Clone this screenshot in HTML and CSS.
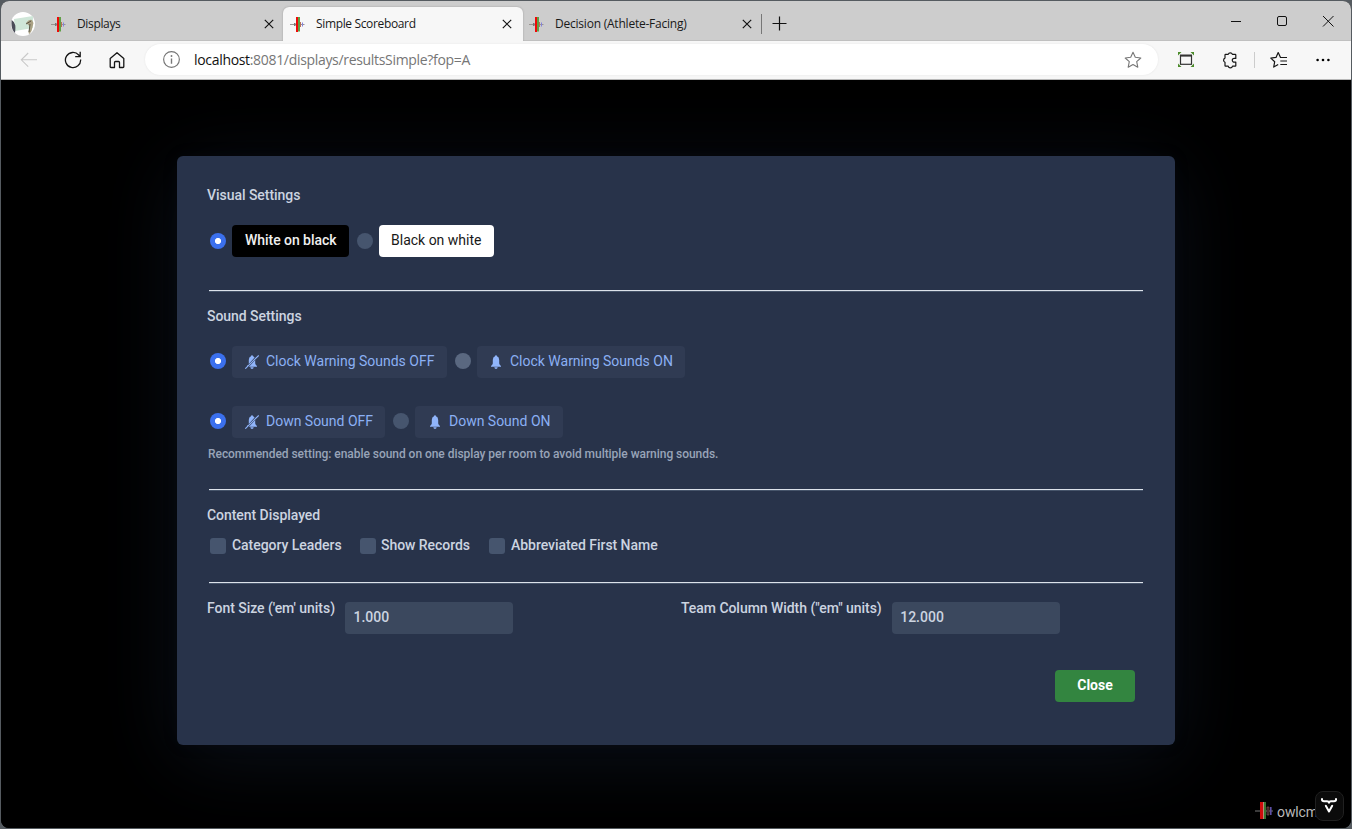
FILE: index.html
```html
<!DOCTYPE html>
<html lang="en">
<head>
<meta charset="utf-8">
<title>Simple Scoreboard</title>
<link rel="stylesheet" href="styles.css">
</head>
<body>
<svg class="defs" width="0" height="0">
  <symbol id="logo" viewBox="0 0 15 15">
    <path d="M0 7.500h14.500" stroke="#99938f" stroke-width="1"/>
    <path d="M4 6h1.500v3H4z" fill="#777"/>
    <path d="M6 0h2v15H6z" fill="#f00808"/>
    <path d="M8 0h2v14.500H8z" fill="#5fa046"/>
    <path d="M10 5h1v5h-1z" fill="#b5705a"/>
    <path d="M12 5.500h1v4h-1z" fill="#8482dc"/>
  </symbol>
  <symbol id="x" viewBox="0 0 10 10"><path d="M.8.8l8.4 8.4M9.200.8L.8 9.200" fill="none" stroke="#111" stroke-width="1.15"/></symbol>
  <symbol id="bell" viewBox="0 0 14 14">
    <path d="M6 1.300Q6 .2 7 .2T8 1.300Q10.200 2 10.200 5v3.600q.2 1.400 1.800 2.300v.9H2v-.9q1.600-.9 1.800-2.300V5Q3.800 2 6 1.300zM5.300 12.300h3.400Q8.500 14 7 14T5.300 12.300z" fill="#90b5fb"/>
  </symbol>
  <symbol id="belloff" viewBox="0 0 14 14">
    <path d="M6 1.300Q6 .2 7 .2T8 1.300Q9 1.600 9.600 2.500L3.800 9V5Q3.800 2 6 1.300zM10.200 5v3.600q.2 1.400 1.800 2.300v.9H3.900zM2 11.800v-.9l1-.8v1.700zM5.300 12.300h3.400Q8.500 14 7 14T5.300 12.300z" fill="#90b5fb"/>
    <path d="M.3 13.700L13.700.4" stroke="#90b5fb" stroke-width="1.1"/>
  </symbol>
</svg>
<div class="window">
  <header class="tabs">
    <svg class="avatar" viewBox="0 0 24 24"><circle cx="12" cy="12" r="12" fill="#fff"/><path d="M3 7l19-3v12L4 19z" fill="#cfe6d8"/><path d="M.7 8q3 2 3.500 5T4 21Q-.5 17 .7 8z" fill="#4a4c58"/><path d="M15 11q3-4 6-3l1.500 3-2 8-2 3-1-1 1-7z" fill="#aaa184"/><path d="M15 12l5-3M19 12l-1 8" stroke="#595848" fill="none"/></svg>
    <div class="tab first"><svg class="fav"><use href="#logo"/></svg><span class="t1">Displays</span><svg class="cross"><use href="#x"/></svg></div>
    <div class="tab active"><svg class="fav"><use href="#logo"/></svg><span class="t2">Simple Scoreboard</span><svg class="cross"><use href="#x"/></svg></div>
    <div class="tab third"><svg class="fav"><use href="#logo"/></svg><span class="t3">Decision (Athlete-Facing)</span><svg class="cross"><use href="#x"/></svg></div>
    <svg class="plus" viewBox="0 0 15 15"><path d="M7.500.5v14M.5 7.500h14" stroke="#111" stroke-width="1.200"/></svg>
    <div class="controls">
      <svg viewBox="0 0 46 40"><path d="M18 20.500h10" stroke="#111"/></svg>
      <svg viewBox="0 0 46 40"><rect x="18.500" y="15.500" width="9" height="9" rx="1.500" fill="none" stroke="#111"/></svg>
      <svg viewBox="0 0 46 40"><path d="M18 15l10.500 10.500M28.500 15L18 25.500" stroke="#111" fill="none"/></svg>
    </div>
  </header>
  <nav class="toolbar">
    <svg class="tool" viewBox="0 0 18 18"><path d="M17 8.800H1.500M8.200 2L1.300 8.800l6.900 6.800" fill="none" stroke="#c9c9c9" stroke-width="1.100"/></svg>
    <svg class="tool" viewBox="0 0 18 18"><path d="M16.600 8.500A7.600 7.600 0 1 1 14.700 4L16 5.500M16.200.8v4.900h-5" fill="none" stroke="#151515" stroke-width="1.300"/></svg>
    <svg class="tool" viewBox="0 0 18 18"><path d="M2.200 7.600L9 1.700l6.800 5.900v8.100q0 .8-.8.800h-3.500v-5q0-1-1-1h-3q-1 0-1 1v5H3q-.8 0-.8-.8z" fill="none" stroke="#151515" stroke-width="1.300" stroke-linejoin="round"/></svg>
    <div class="address">
      <svg class="info" viewBox="0 0 16 16"><circle cx="8" cy="8" r="7.400" fill="none" stroke="#777" stroke-width="1.100"/><path d="M8 7v5" stroke="#777" stroke-width="1.300"/><circle cx="8" cy="4.700" r=".9" fill="#777"/></svg>
      <span class="url"><b>localhost</b>:8081/displays/resultsSimple?fop=A</span>
      <svg class="star" viewBox="0 0 18 18"><path d="M9 1.300l2.300 5 5.500.7-4.100 3.700 1.100 5.500L9 13.500l-4.800 2.700 1.100-5.500L1.200 7l5.500-.7z" fill="none" stroke="#777" stroke-width="1.100" stroke-linejoin="round"/></svg>
    </div>
    <div class="actions">
      <svg viewBox="0 0 18 18"><rect x="3.500" y="4.600" width="11" height="8.700" fill="none" stroke="#333" stroke-width="1.200"/><path d="M3 4.600h12" stroke="#333" stroke-width="2"/><path d="M1 4.500V1h3.500zM13.500 1H17v3.500zM1 12.500V16h3.500zM17 12.500V16h-3.500z" fill="#4c8b2b"/></svg>
      <svg viewBox="0 0 18 18"><path d="M4.500 3.400h2.700a2.200 2.200 0 0 1 4.200 0h2.900q.5 0 .5.500v3.500h-1.200a1.900 1.900 0 1 0 0 3.700h1.200v3.600q0 .5-.5.500h-2.800a2.200 2.200 0 0 1-4.300 0H4.500q-.5 0-.5-.5v-3.500a2.200 2.200 0 0 1 0-4.100V4q0-.6.500-.6z" fill="none" stroke="#171717" stroke-width="1.200" stroke-linejoin="round"/></svg>
      <i></i>
      <svg viewBox="0 0 18 18"><path d="M11 6.400h-.5L8.200 1.500 6 6.400l-5.200.7 3.900 3.600-1 5.400 4.500-2.600M10.300 6.500H17M10.300 10H17M10.300 13.500H17" fill="none" stroke="#171717" stroke-width="1.200" stroke-linejoin="round"/></svg>
      <svg viewBox="0 0 18 18"><circle cx="3.600" cy="9" r="1.300"/><circle cx="9" cy="9" r="1.300"/><circle cx="14.400" cy="9" r="1.300"/></svg>
    </div>
  </nav>
  <main class="page">
    <section class="dialog">
      <h2 class="s1">Visual Settings</h2>
      <div class="row"><span class="radio on"></span><span class="chip black">White on black</span><span class="radio"></span><span class="chip white">Black on white</span></div>
      <hr class="gap33">
      <h2 class="s2">Sound Settings</h2>
      <div class="row sound"><span class="radio on"></span><span class="chip cwoff"><svg><use href="#belloff"/></svg>Clock Warning Sounds OFF</span><span class="radio hover"></span><span class="chip cwon"><svg><use href="#bell"/></svg>Clock Warning Sounds ON</span></div>
      <div class="row sound down"><span class="radio on"></span><span class="chip doff"><svg><use href="#belloff"/></svg>Down Sound OFF</span><span class="radio"></span><span class="chip don"><svg><use href="#bell"/></svg>Down Sound ON</span></div>
      <p class="help">Recommended setting: enable sound on one display per room to avoid multiple warning sounds.</p>
      <hr class="gap27">
      <h2 class="s3">Content Displayed</h2>
      <div class="checks"><label class="c1"><i></i>Category Leaders</label><label class="c2"><i></i>Show Records</label><label class="c3"><i></i>Abbreviated First Name</label></div>
      <hr class="gap26">
      <div class="fields">
        <div class="field"><span>Font Size ('em' units)</span><div class="input">1.000</div></div>
        <div class="field"><span>Team Column Width ("em" units)</span><div class="input">12.000</div></div>
      </div>
      <div class="footer"><button>Close</button></div>
    </section>
    <div class="brand"><svg viewBox="0 0 19 18"><path d="M1 9h18" stroke="#777" stroke-width="1"/><path d="M6 0h3v17H6z" fill="#d00c0c"/><path d="M9 0h1v17H9z" fill="#b88878"/><path d="M10 0h2v17h-2z" fill="#39752f"/><path d="M13 5h2v8h-2z" fill="#301c1d" stroke="#8a5555" stroke-width=".6"/><path d="M16 5h1.600v8H16z" fill="#5c50a6"/></svg><span>owlcms</span></div>
    <div class="vaadin"><svg viewBox="0 0 16 16"><path d="M1 1v.8Q1 3.200 3 3.200h3Q8 3.200 8 4.700 8 3.200 10 3.200h3q2 0 2-1.400V1M4.800 7.800L8 13.500l3.200-5.700" fill="none" stroke="#fff" stroke-width="2" stroke-linecap="round" stroke-linejoin="round"/></svg></div>
  </main>
</div>
</body>
</html>
```
FILE: styles.css
```css
* { box-sizing: border-box; }
body { margin: 0; width: 1352px; height: 829px; overflow: hidden; background: #555b60; font-family: Roboto, sans-serif; }
.defs { position: absolute; }
svg { display: block; flex: none; }
.window { display: flex; flex-direction: column; margin: 1px; width: 1350px; height: 827px; border-radius: 8px; overflow: hidden; background: #000; }
.tabs { display: flex; height: 40px; background: #cdcdcd; font: 12px "Open Sans", "Noto Sans", sans-serif; color: #191919; box-shadow: inset 0 -1px #c0c0c0; }
.avatar { width: 24px; height: 24px; margin: 11px 0 0 10px; }
.tab { display: flex; flex: none; align-items: center; height: 34px; margin-top: 6px; padding: 0 11px 0 7px; white-space: nowrap; }
.tab span { margin-left: 11px; line-height: 34px; letter-spacing: -.35px; }
.tab .t3 { letter-spacing: -.22px; }
.first { width: 239px; margin-left: 10px; padding: 0 10px 0 6px; }
.active { width: 240px; margin-left: -1px; background: #f7f7f7; border-radius: 6px 6px 0 0; box-shadow: 0 0 2px #999; }
.third { width: 239px; height: 20px; margin-top: 13px; padding: 0 9px 0 6px; border-right: 1px solid #777; }
.fav { width: 15px; height: 15px; }
.cross { width: 10px; height: 10px; margin-left: auto; }
.plus { width: 15px; height: 15px; margin: 15px 0 0 10px; }
.controls { display: flex; margin-left: auto; }
.controls svg { width: 46px; height: 40px; }
.toolbar { display: flex; align-items: center; height: 39px; flex: none; background: #f7f7f7; border-bottom: 1px solid #b8b8b8; padding: 0 0 1px 19px; }
.tool { width: 18px; height: 18px; margin-right: 26px; }
.address { display: flex; flex: none; align-items: center; width: 1013px; height: 31px; margin-left: -8px; padding: 0 16px 0 18px; border-radius: 16px; background: #fff; box-shadow: 0 0 2px #e2e2e2; }
.tool:nth-child(3) { margin-right: 27px; }
.info { width: 17px; height: 17px; }
.url { margin-left: 14px; font: 14px "Open Sans", "Noto Sans", sans-serif; color: #767676; white-space: nowrap; letter-spacing: -.32px; }
.url b { font-weight: 400; color: #111; }
.star { width: 18px; height: 18px; margin-left: auto; }
.actions { display: flex; flex: none; align-items: center; margin-left: 19px; }
.actions svg { width: 18px; height: 18px; margin-right: 26px; }
.actions svg:nth-of-type(2) { margin-right: 27px; }
.actions svg:last-child { margin-right: 0; }
.actions i { width: 1px; height: 16px; margin: 0 15px 0 -12px; background: #ccc; }
.page { position: relative; flex: 1; background: #000; }
.dialog { width: 998px; height: 589px; margin: 76px 0 0 176px; padding: 29px 32px 0 30px; border-radius: 6px; background: #28334a; box-shadow: 0 0 16px rgba(30,42,62,.1), 0 12px 80px rgba(26,38,57,.45); color: #ccd4e0; font-size: 14px; font-weight: 500; letter-spacing: -.045px; white-space: nowrap; }
h2 { margin: 0; font-size: 14px; line-height: 20px; font-weight: 500; }
.row { display: flex; align-items: center; height: 32px; margin-top: 20px; padding-left: 3px; }
.row.down { margin-top: 28px; }
.radio { width: 16px; height: 16px; margin-right: 6px; border-radius: 50%; background: #46556e; }
.sound .radio { margin-bottom: 2px; }
.radio.hover { background: #5a6880; }
.radio.on { background: radial-gradient(circle, #fff 2.700px, #3b70ed 3.500px); }
.chip { display: flex; align-items: center; height: 32px; margin-right: 8px; padding: 0 0 2px 13px; border-radius: 4px; background: #303b53; color: #8bb0f4; }
.chip svg { width: 14px; height: 14px; margin: 2px 7px 0 0; }
.black { width: 117px; background: #000; color: #f0f0f0; }
.white { width: 115px; padding-left: 12px; background: #fff; color: #181818; font-weight: 400; letter-spacing: 0; }
.cwoff { width: 215px; }
.cwon { width: 208px; padding-left: 12px; }
.doff { width: 153px; }
.don { width: 148px; }
.cwoff, .cwon, .doff, .don { font-weight: 400; letter-spacing: -.01px; }
hr { height: 2px; margin: 0 0 14px 2px; border: 0; background: linear-gradient(#dce2ea 50%, #46546a 50%); }
.gap33 { margin-top: 33px; }
.gap27 { margin-top: 27px; }
.gap26 { margin-top: 26px; }
.help { margin: 8px 0 0 1px; font-size: 12px; line-height: 16px; color: #98a4b8; }
.checks { display: flex; height: 20px; margin-top: 11px; padding-left: 3px; line-height: 19px; }
.checks label { display: flex; }
.checks i { width: 16px; height: 16px; margin: 2px 6px 0 0; border-radius: 3px; background: #46556e; }
.c1 { width: 150px; }
.c2 { width: 129px; }
.c2 i { margin-right: 5px; }
.fields { display: flex; }
.field { display: flex; flex: none; width: 474px; line-height: 20px; }
.field:last-child { width: 462px; }
.input { width: 168px; height: 32px; margin: 4px 0 0 10px; padding-left: 8.500px; border-radius: 4px; background: #3b485e; line-height: 31px; letter-spacing: 0; }
.footer { display: flex; justify-content: flex-end; margin-top: 36px; padding-right: 8px; }
button { width: 80px; height: 32px; padding: 0 0 2px; border: 0; border-radius: 4px; background: #338540; color: #fff; font: 700 14px Roboto, sans-serif; }
.brand { position: absolute; left: 1253px; top: 722px; display: flex; align-items: center; color: #b9b9b9; font-size: 14px; letter-spacing: -.1px; }
.brand svg { width: 19px; height: 18px; margin-right: 4px; }
.brand span { padding-top: 1px; }
.vaadin { position: absolute; left: 1314px; top: 711px; width: 29px; height: 30px; padding: 6px 0 0 5px; border: 1px solid #202020; border-radius: 8px; background: #0b0b0b; }
.vaadin svg { width: 16px; height: 16px; }
```
